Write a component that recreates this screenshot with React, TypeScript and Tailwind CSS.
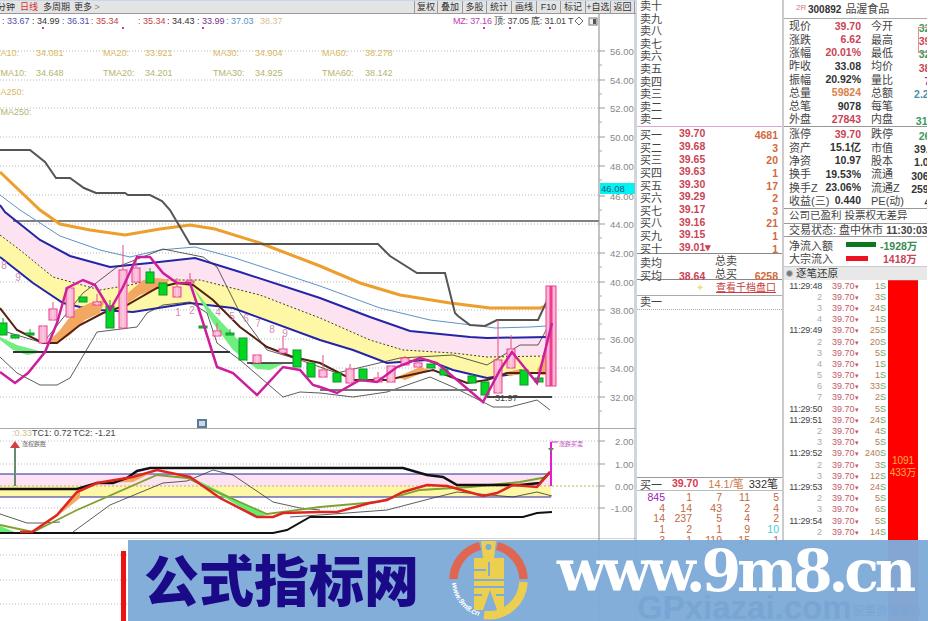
import React from "react";

type P = [number, number][];
const pts = (p: P) => p.map((a) => a.join(",")).join(" ");

const step: P = [[0,150],[30,150],[45,162],[56,178],[70,178],[84,188],[96,193],[125,193],[128,195],[150,195],[162,201],[170,210],[190,244],[378,244],[390,256],[417,273],[445,273],[455,313],[458,316],[470,325],[485,326],[497,320],[538,320],[552,290]];
const orange: P = [[0,172],[40,210],[60,224],[90,230],[125,235],[160,229],[190,225],[215,229],[260,243],[320,266],[360,283],[400,295],[450,303],[490,308],[520,308],[540,308],[550,305]];
const ltBlue: P = [[0,195],[20,210],[60,236],[100,250],[130,257],[160,250],[195,247],[235,258],[320,286],[380,308],[430,320],[480,326],[495,328],[530,327],[547,326]];
const blueTop: P = [[0,205],[5,212],[40,240],[70,256],[110,267],[150,263],[195,258],[240,272],[320,298],[370,317],[410,331],[470,337],[487,338],[548,337]];
const dashed: P = [[0,235],[20,250],[53,277],[100,290],[130,285],[150,280],[200,280],[260,295],[320,318],[370,340],[403,350],[453,353],[487,357],[548,356]];
const blueLow: P = [[0,257],[33,283],[63,303],[80,307],[100,310],[133,312],[190,303],[233,308],[320,340],[353,350],[387,363],[427,360],[453,370],[487,378],[520,373],[548,373]];
const magenta: P = [[0,372],[15,383],[28,373],[45,352],[57,323],[67,288],[83,280],[95,285],[110,310],[123,287],[137,257],[150,257],[163,273],[177,283],[190,283],[200,313],[217,367],[233,373],[257,395],[283,367],[300,370],[313,385],[320,387],[337,393],[360,380],[377,382],[397,367],[420,358],[437,363],[483,402],[500,370],[512,352],[537,383],[552,323]];
const brown: P = [[0,308],[17,330],[43,343],[57,343],[80,325],[103,313],[127,305],[157,288],[177,283],[193,285],[213,300],[240,327],[267,347],[293,357],[320,363],[353,380],[387,380],[433,370],[467,383],[487,380],[507,373],[548,373]];
const thinLow: P = [[0,357],[17,373],[40,385],[57,385],[70,378],[97,332],[137,327],[147,313],[163,305],[190,302],[207,313],[217,343],[240,360],[283,397],[300,392],[320,393],[353,397],[387,392],[430,377],[453,387],[493,407],[510,407],[537,400],[550,410]];
const thinUp: P = [[0,330],[43,343],[83,293],[117,267],[163,249],[203,257],[217,267],[240,313],[267,350],[300,360],[337,373],[400,358],[453,355],[487,365],[520,345],[538,345],[550,323]];

const candles: [number, number, number, number, boolean, number?][] = [
  [3,323,335,318,false],[15,335,338,335,false],[30,333,335,329,false],[43,326,343,326,true],[53,309,320,302,true],[70,288,317,288,true],[83,297,302,297,false],[97,302,305,294,true],[110,306,328,300,false],[123,270,328,245,true],[136,268,282,258,true],[150,272,283,268,false],[163,283,295,283,false],[177,287,297,278,true],[190,281,283,273,true],[203,326,328,326,false],[217,331,336,323,true],[230,333,335,329,false],[243,338,360,338,false],[257,355,363,355,true],[283,349,353,336,true],[297,350,367,350,false],[311,363,377,363,false],[323,370,377,355,true],[337,373,382,373,false],[350,369,383,364,true],[363,369,381,369,false],[378,378,382,372,true],[391,366,382,366,true],[405,358,365,356,true],[418,363,367,360,true],[431,364,368,364,false],[444,369,375,366,false],[472,376,383,374,false],[485,382,395,382,false],[498,360,393,320,true],[511,349,368,335,true],[524,370,385,370,false],[539,378,382,378,false],[551,286,386,286,true,10],
];

const gridY = [51,80,108,137,166,195,224,253,282,310,339,368,397];
const axisLabels: [string, number][] = [["56.00",51],["54.00",80],["52.00",108],["50.00",137],["48.00",166],["46.00",196],["44.00",224],["42.00",253],["40.00",282],["38.00",310],["36.00",339],["34.00",368],["32.00",397]];
const seq: [string, number, number][] = [["8",4,265],["9",18,277],["1",178,312],["2",192,310],["4",218,312],["5",232,316],["6",246,318],["7",258,323],["8",272,329],["9",285,333]];

const MainChart = () => (
  <svg viewBox="0 14 637 414" width={637} height={414} className="block shrink-0">
    {gridY.map((y) => <line key={y} x1={0} x2={599} y1={y} y2={y} stroke="#b8b8b8" strokeDasharray="1 2" />)}
    <polygon points={pts([...blueTop, ...[...dashed].reverse()])} fill="#fde3f1" />
    <polygon points={pts([...dashed, ...[...blueLow].reverse()])} fill="#fdf7a6" />
    <line x1={13} x2={599} y1={221} y2={221} stroke="#808080" strokeWidth={2} />
    <polyline points={pts(ltBlue)} fill="none" stroke="#5f92c4" />
    <polyline points={pts(orange)} fill="none" stroke="#ee9e2c" strokeWidth={3} />
    <polyline points={pts(blueTop)} fill="none" stroke="#2424a8" strokeWidth={2} />
    <polyline points={pts(dashed)} fill="none" stroke="#404020" strokeDasharray="2 2" />
    <polyline points={pts(blueLow)} fill="none" stroke="#2424a8" strokeWidth={2} />
    <polyline points={pts(step)} fill="none" stroke="#555" strokeWidth={2} />
    <polygon points="47,343 60,330 75,310 90,303 105,300 100,313 85,320 70,335 57,343" fill="#f2a860" />
    <polygon points="128,293 143,280 157,278 170,280 160,288 140,295 128,303" fill="#f2a860" />
    <polygon points="0,337 17,345 43,352 27,355 13,350 0,340" fill="#70ee80" />
    <polygon points="193,287 213,313 240,342 248,362 233,350 213,323" fill="#70ee80" />
    <polygon points="248,362 283,364 270,370 257,369" fill="#70ee80" />
    <polygon points="397,377 420,367 430,370 405,380" fill="#f2a860" />
    <polygon points="503,373 520,369 530,372 510,376" fill="#f2a860" />
    <polygon points="537,370 548,350 548,375 540,375" fill="#f2a860" />
    <polyline points={pts(thinUp)} fill="none" stroke="#333" strokeWidth={0.8} />
    <polyline points={pts(thinLow)} fill="none" stroke="#333" strokeWidth={0.8} />
    <polyline points={pts(brown)} fill="none" stroke="#552010" strokeWidth={2} />
    <line x1={13} x2={230} y1={352} y2={352} stroke="#333" strokeWidth={2} />
    <line x1={247} x2={300} y1={363} y2={363} stroke="#222" strokeWidth={1.5} />
    <line x1={320} x2={477} y1={390} y2={390} stroke="#777" strokeWidth={2} />
    <line x1={487} x2={552} y1={397} y2={397} stroke="#444" strokeWidth={2} />
    {candles.map(([x, t, b, w, up, cw], i) => {
      const wd = cw ?? 8;
      return (
        <g key={i}>
          <line x1={x} x2={x} y1={w} y2={t} stroke={up ? "#e05080" : "#00b020"} />
          {up ? (
            <>
              <rect x={x - wd / 2} y={t} width={wd} height={b - t} fill="#fbb8d4" stroke="#ee3c90" />
              <line x1={x} x2={x} y1={t} y2={b} stroke={wd > 8 ? "#ee3c90" : "#f9d8e8"} strokeWidth={wd > 8 ? 3 : 1} />
            </>
          ) : (
            <rect x={x - wd / 2} y={t} width={wd} height={b - t} fill="#00d820" stroke="#109030" />
          )}
        </g>
      );
    })}
    <polyline points={pts(magenta)} fill="none" stroke="#cc1f9c" strokeWidth={2.5} />
    {seq.map(([t, x, y], i) => <text key={i} x={x} y={y + 4} fontSize={10} fill="#d28ab2" textAnchor="middle">{t}</text>)}
    <text x={495} y={401} fontSize={9} fill="#444">31.97</text>

    <g fontSize={9}>
      {([[2,"#4a50b0",": 33.67"],[32,"#333",": 34.99"],[62,"#4a50b0",": 36.31"],[91,"#c0404a",": 35.34"],[138,"#c0404a",": 35.34"],[167,"#333",": 34.43"],[197,"#703090",": 33.99"],[226,"#5a90c0",": 37.03"],[260,"#e0c090","38.37"]] as [number,string,string][]).map(([x,c,t],i)=><text key={i} x={x} y={24} fill={c}>{t}</text>)}
      {([[-7,"MA10:",53],[36,"34.081",53],[103,"MA20:",53],[145,"33.921",53],[213,"MA30:",53],[255,"34.904",53],[322,"MA60:",53],[365,"38.278",53]] as [number,string,number][]).map(([x,t,y],i)=><text key={i} x={x} y={y+3} fill="#d8b860">{t}</text>)}
      {([[-5,"TMA10:",73],[36,"34.648",73],[103,"TMA20:",73],[145,"34.201",73],[213,"TMA30:",73],[255,"34.925",73],[322,"TMA60:",73],[365,"38.142",73]] as [number,string,number][]).map(([x,t,y],i)=><text key={i} x={x} y={y+3} fill="#b4b470">{t}</text>)}
      <text x={-7} y={95} fill="#d8b860">MA250:</text>
      <text x={-5} y={115} fill="#b4b470">TMA250:</text>
      <text x={453} y={24} fill="#c040b0" letterSpacing={-0.2}>MZ: 37.16</text>
      <text x={494} y={24} fill="#444" letterSpacing={-0.2}>顶: 37.05</text>
      <text x={531} y={24} fill="#444" letterSpacing={-0.2}>底: 31.01</text>
      <text x={568} y={24} fill="#444">T</text>
    </g>
    {[[42,27],[122,27],[202,27],[483,27],[509,27],[549,27]].map(([x,y],i)=><rect key={i} x={x} y={y} width={2} height={2} fill="#c040b0" />)}
    <path d="M579 17 l4 4 l-4 4 l-4 -4 z" fill="none" stroke="#666" />
    <rect x={589} y={18} width={8} height={7} fill="#eee" stroke="#777" />
    <rect x={593} y={19} width={3} height={5} fill="#555" />

    <rect x={197} y={419} width={10} height={9} fill="#5a7a98" />
    <rect x={199} y={421} width={6} height={5} fill="#c8d8e8" />

    <line x1={599} x2={599} y1={14} y2={428} stroke="#888" />
    {axisLabels.map(([t,y]) => (
      <g key={t}>
        <line x1={599} x2={605} y1={y} y2={y} stroke="#999" />
        <line x1={599} x2={602} y1={y+14} y2={y+14} stroke="#aaa" />
        <text x={610} y={y+3.5} fontSize={9.5} fill="#888">{t}</text>
      </g>
    ))}
    <rect x={600} y={183} width={35} height={11} fill="#00f4f4" />
    <text x={601} y={192} fontSize={9.5} fill="#205a80">46.08</text>
    <line x1={635} x2={635} y1={14} y2={428} stroke="#aaa" />
  </svg>
);

const sBlack: P = [[0,489],[77,489],[97,483],[113,483],[127,478],[137,471],[150,468],[403,468],[427,475],[443,477],[457,485],[520,485],[540,483],[550,472]];
const sBottom: P = [[0,533],[273,533],[287,530],[310,517],[523,517],[537,513],[552,512]];
const sRed: P = [[20,532],[32,532],[57,515],[77,492],[97,483],[133,477],[157,470],[190,477],[220,498],[257,517],[273,517],[283,513],[320,512],[337,512],[370,503],[387,500],[403,492],[427,485],[447,486],[483,496],[497,493],[513,485],[537,487],[550,472]];
const sOlive: P = [[0,525],[33,532],[77,510],[157,475],[187,478],[217,492],[267,514],[320,507],[377,502],[420,490],[470,487],[520,482],[547,477]];
const sThin1: P = [[0,514],[27,523],[43,523],[60,522]];
const sThin2: P = [[73,532],[110,505],[163,483],[187,481],[213,470],[233,475],[273,502],[300,508],[320,510]];
const sThin3: P = [[290,517],[320,515],[387,510],[433,498],[457,492],[513,497],[537,492],[552,496]];

const SubChart = () => (
  <svg viewBox="0 428 637 110" width={637} height={110} className="block shrink-0">
    <line x1={0} x2={637} y1={428.5} y2={428.5} stroke="#aaa" />
    <rect x={0} y={474} width={551} height={12} fill="#fde3f1" />
    <rect x={0} y={486} width={551} height={11} fill="#fdf7a6" />
    {[441,464,508].map((y)=><line key={y} x1={0} x2={599} y1={y} y2={y} stroke="#bbb" strokeDasharray="1 2" />)}
    <line x1={0} x2={599} y1={486} y2={486} stroke="#c8b060" strokeDasharray="2 2" />
    <line x1={0} x2={551} y1={474} y2={474} stroke="#2424a8" />
    <line x1={0} x2={551} y1={497} y2={497} stroke="#2424a8" />
    <polygon points="50,522 80,490 80,498" fill="#f2a860" />
    <polygon points="100,483 157,470 133,482" fill="#f2a860" />
    <polygon points="193,478 267,515 257,517 220,495" fill="#60ee70" />
    <polygon points="0,526 17,533 0,532" fill="#60ee70" />
    <polyline points={pts(sThin1)} fill="none" stroke="#333" strokeWidth={0.8} />
    <polyline points={pts(sThin2)} fill="none" stroke="#333" strokeWidth={0.8} />
    <polyline points={pts(sThin3)} fill="none" stroke="#333" strokeWidth={0.8} />
    <polyline points={pts(sOlive)} fill="none" stroke="#80a030" strokeWidth={1.8} />
    <polyline points={pts(sBottom)} fill="none" stroke="#111" strokeWidth={2} />
    <polyline points={pts(sBlack)} fill="none" stroke="#111" strokeWidth={2.5} />
    <polyline points={pts(sRed)} fill="none" stroke="#e02420" strokeWidth={2.5} />
    <line x1={15} x2={15} y1={486} y2={446} stroke="#6a8a70" strokeWidth={2} />
    <polygon points="15,441 20,448 10,448" fill="#d04040" />
    <text x={22} y={446} fontSize={6} fill="#666">涨权跌胜</text>
    <line x1={551} x2={551} y1={442} y2={486} stroke="#e020d0" strokeWidth={2} />
    <line x1={551} x2={558} y1={442} y2={442} stroke="#e020d0" />
    <polygon points="548,448 554,448 551,452" fill="#777" />
    <text x={559} y={446} fontSize={6} fill="#c050c0">涨跌买卖</text>
    <g fontSize={9}>
      <text x={12} y={436} fill="#d0c090">:0.33</text>
      <text x={32} y={436} fill="#444">TC1: 0.72</text>
      <text x={73} y={436} fill="#444">TC2: -1.21</text>
    </g>
    <line x1={599} x2={599} y1={428} y2={538} stroke="#888" />
    {([["2.00",441,615],["1.00",464,615],["0.00",486,615],["-1.00",508,611]] as [string,number,number][]).map(([t,y,x])=>(
      <g key={t}>
        <line x1={599} x2={605} y1={y} y2={y} stroke="#999" />
        <text x={x} y={y+3.5} fontSize={9.5} fill="#888">{t}</text>
      </g>
    ))}
    <line x1={635} x2={635} y1={428} y2={538} stroke="#aaa" />
  </svg>
);

const ThirdPane = () => (
  <svg viewBox="0 538 637 83" width={637} height={83} className="block shrink-0">
    <line x1={0} x2={637} y1={538} y2={538} stroke="#aaa" />
    {[555,580,604].map((y)=><line key={y} x1={0} x2={599} y1={y} y2={y} stroke="#bbb" strokeDasharray="1 2" />)}
    <rect x={121} y={551} width={5} height={70} fill="#ee1111" />
    <line x1={599} x2={599} y1={538} y2={621} stroke="#888" />
    <line x1={635} x2={635} y1={538} y2={621} stroke="#aaa" />
  </svg>
);

const tabs: [string, number][] = [["复权",23],["叠加",25],["多股",24],["统计",25],["画线",25],["F10",24],["标记",25],["+自选",25],["返回",24]];

const Toolbar = () => (
  <div className="h-[14px] shrink-0 flex items-center bg-[#e4e4e4] border-t border-t-[#c8d8e8] border-b border-b-[#999] text-[9px] text-[#333] leading-none">
    <span className="w-[15px] shrink-0 overflow-hidden whitespace-nowrap flex justify-end">分钟</span>
    <span className="ml-[5px] text-[#d03030] w-[23px] shrink-0 whitespace-nowrap">日线</span>
    <span className="whitespace-nowrap w-[31px] shrink-0">多周期</span>
    <span className="whitespace-nowrap">更多 <span className="text-[#888]">&gt;</span></span>
    <div className="ml-auto flex h-full">
      {tabs.map(([t, w]) => (
        <span key={t} style={{ width: w }} className="flex items-center justify-center border-l border-[#999] whitespace-nowrap">{t}</span>
      ))}
      <span className="w-[1px] bg-[#999]" />
      <span className="w-[1px]" />
    </div>
  </div>
);

const L = ({ children }: { children: React.ReactNode }) => <span className="text-[#444] text-[11px] whitespace-nowrap">{children}</span>;
const B = ({ c, children }: { c: string; children: React.ReactNode }) => <span style={{ color: c }} className="font-bold text-[10.5px] whitespace-nowrap">{children}</span>;

const sellLabels = ["卖十","卖九","卖八","卖七","卖六","卖五","卖四","卖三","卖二","卖一"];
const buys: [string,string,string][] = [["买一","39.70","4681"],["买二","39.68","3"],["买三","39.65","20"],["买四","39.63","1"],["买五","39.30","17"],["买六","39.29","2"],["买七","39.17","3"],["买八","39.16","21"],["买九","39.15","1"],["买十","39.01▾","1"]];
const red = "#c94455", org = "#d06a3c";
const vol = [["845","1","7","11","5"],["4","14","43","2","4"],["14","237","5","4","2"],["1","2","1","9","10"],["3","1","119","15","1"]];

const Book = () => (
  <div className="w-[148px] shrink-0 flex flex-col border-r-2 border-[#ccc] border-l border-l-[#c8d8e8] overflow-hidden h-full">
    <div className="h-[127px] shrink-0 flex flex-col border-b border-[#dda8d0] pl-[3px]">
      {sellLabels.map((t)=><div key={t} className="h-[12.6px] flex items-center"><L>{t}</L></div>)}
    </div>
    <div className="h-[127px] shrink-0 pl-[3px] pr-[4px] pt-[1px] border-b border-[#888]">
      {buys.map(([a,b,c])=>(
        <div key={a} className="h-[12.6px] flex items-center">
          <span className="w-[39px]"><L>{a}</L></span>
          <B c={red}>{b}</B>
          <span className="ml-auto"><B c={org}>{c}</B></span>
        </div>
      ))}
    </div>
    <div className="h-[26px] shrink-0 pl-[3px] pr-[4px] pt-[1px] border-b border-[#888] flex flex-col">
      <div className="h-[13px] flex items-center"><span className="w-[75px]"><L>卖均</L></span><L>总卖</L></div>
      <div className="h-[13px] flex items-center"><span className="w-[39px]"><L>买均</L></span><span className="w-[36px]"><B c={red}>38.64</B></span><L>总买</L><span className="ml-auto"><B c={org}>6258</B></span></div>
    </div>
    <div className="h-[16px] shrink-0 border-b border-[#aaa] flex items-center pl-[59px] gap-[12px]">
      <span className="text-[10px] text-[#eee080] leading-none">✦</span>
      <span className="text-[#c83c3c] text-[10px] underline whitespace-nowrap">查看千档盘口</span>
    </div>
    <div className="h-[14px] shrink-0 pl-[3px] border-b border-dotted border-[#aaa] flex items-center"><L>卖一</L></div>
    <div className="flex-1 min-h-0 flex flex-col">
      <div className="h-[167px] shrink-0" />
      <div className="h-[14px] shrink-0 border-t border-[#999] border-b border-b-[#bbb] flex items-center pl-[3px] pr-[4px]" >
        <span className="w-[32px]"><L>买一</L></span>
        <B c="#d83a50">39.70</B>
        <span className="ml-[10px] text-[#d07a4a] text-[11px] whitespace-nowrap">14.1/笔</span>
        <span className="ml-auto text-[#333] text-[11px] whitespace-nowrap">332笔</span>
      </div>
      <div className="pt-[1px]">
        {vol.map((r,i)=>(
          <div key={i} className="grid grid-cols-[28px_27px_30px_28px_29px] h-[10.7px] items-center text-[10.5px] leading-none">
            {r.map((v,j)=><span key={j} className="text-right font-medium" style={{color: v==="845"?"#9a20b8":v==="10"?"#40d0d8":"#c2683e"}}>{v}</span>)}
          </div>
        ))}
      </div>
    </div>
  </div>
);

const Q = ({ a, b, bc, c, d, dc, box }: { a: string; b: string; bc: string; c: string; d: string; dc: string; box?: boolean }) => (
  <div className="h-[13.3px] flex items-center pl-[5px] w-[170px]">
    <div className="w-[72px] flex items-center justify-between shrink-0"><L>{a}</L><B c={bc}>{b}</B></div>
    <div className="ml-[10px] w-[74px] flex items-center justify-between shrink-0"><L>{c}</L><span className={box ? "outline outline-1 outline-[#e09090]" : ""}><B c={dc}>{d}</B></span></div>
  </div>
);

const dk = "#333";
const grn = "#3a9a5a";
const ticks: [string,string][] = [["11:29:48","1"],["2","3"],["3","24"],["4","1"],["11:29:49","25"],["2","20"],["3","5"],["4","1"],["5","1"],["6","33"],["7","2"],["11:29:50","5"],["11:29:51","24"],["2","4"],["3","5"],["11:29:52","240"],["2","3"],["3","12"],["11:29:53","24"],["2","5"],["3","6"],["11:29:54","5"],["2","14"]];

const Quote = () => (
  <div className="w-[143px] shrink-0 flex flex-col overflow-hidden h-full">
    <div className="h-[19px] shrink-0 border-b border-[#aaa] flex items-center pl-[12px]">
      <span className="text-[8px] text-[#d87a8a] leading-none mb-[3px] w-[12px] whitespace-nowrap">2R</span>
      <span className="font-bold text-[10px] text-[#333]">300892</span>
      <span className="ml-[4px] text-[#444] text-[11px] whitespace-nowrap">品渥食品</span>
    </div>
    <div className="h-[108px] shrink-0 border-b border-[#999] pt-[1px]">
      <Q a="现价" b="39.70" bc={red} c="今开" d="32.40" dc={grn} />
      <Q a="涨跌" b="6.62" bc={red} c="最高" d="39.70" dc={red} box />
      <Q a="涨幅" b="20.01%" bc={red} c="最低" d="32.00" dc={grn} />
      <Q a="昨收" b="33.08" bc={dk} c="均价" d="38.64" dc={red} />
      <Q a="振幅" b="20.92%" bc={dk} c="量比" d="7.09" dc="#9030b0" />
      <Q a="总量" b="59824" bc="#d8804a" c="总额" d="2.21亿" dc="#4a90a8" />
      <Q a="总笔" b="9078" bc={dk} c="每笔" d="" dc={dk} />
      <Q a="外盘" b="27843" bc={red} c="内盘" d="31981" dc={grn} />
    </div>
    <div className="h-[82px] shrink-0 border-b border-[#999] pt-[1px]">
      <Q a="涨停" b="39.70" bc={red} c="跌停" d="26.46" dc={grn} />
      <Q a="资产" b="15.1亿" bc={dk} c="市值" d="39.7亿" dc={dk} />
      <Q a="净资" b="10.97" bc={dk} c="股本" d="1.00亿" dc={dk} />
      <Q a="换手" b="19.53%" bc={dk} c="流通" d="3063万" dc={dk} />
      <Q a="换手Z" b="23.06%" bc={dk} c="流通Z" d="2593万" dc={dk} />
      <Q a="收益(三)" b="0.440" bc={dk} c="PE(动)" d="45.1" dc={dk} />
    </div>
    <div className="h-[15px] shrink-0 border-b border-[#999] flex items-center pl-[5px]"><span className="text-[#444] text-[10.5px] whitespace-nowrap">公司已盈利 投票权无差异</span></div>
    <div className="h-[13px] shrink-0 border-b border-[#999] flex items-center pl-[5px] whitespace-nowrap"><span className="text-[#444] text-[11px]">交易状态: 盘中休市 <span className="font-bold text-[10.5px]">11:30:03</span></span></div>
    <div className="h-[29px] shrink-0 flex flex-col justify-center pl-[5px]">
      <div className="h-[13.3px] flex items-center whitespace-nowrap w-[170px]">
        <span className="w-[57px]"><L>净流入额</L></span>
        <span className="w-[30px] h-[5px] bg-[#0a7a20]" />
        <span className="ml-[4px]"><B c="#3a8a50">-1928万</B></span>
        <span className="ml-[11px]"><B c="#3a8a50">-</B></span>
      </div>
      <div className="h-[13.3px] flex items-center whitespace-nowrap">
        <span className="w-[57px]"><L>大宗流入</L></span>
        <span className="w-[22px] h-[5px] bg-[#ee1122]" />
        <span className="ml-[15px]"><B c={red}>1418万</B></span>
      </div>
    </div>
    <div className="h-[14px] shrink-0 bg-[#e8e8e8] border-t border-[#ccc] flex items-center pl-[2px] gap-[3px]">
      <span className="w-[7px] h-[7px] rounded-full bg-[#777] border border-[#bbb]" />
      <span className="text-[10.5px] text-[#333] whitespace-nowrap">逐笔还原</span>
    </div>
    <div className="flex-1 min-h-0 flex relative">
      <div className="w-[104px] shrink-0 pt-[0.5px]">
        {ticks.map(([t,q],i)=>(
          <div key={i} className="h-[11.2px] flex items-center text-[9px] leading-none whitespace-nowrap">
            <span className={t.length>2?"w-[38px] text-right text-[#444] tracking-[-0.2px]":"w-[38px] text-right text-[#aaa]"}>{t}</span>
            <span className="ml-[10px] w-[30px] text-[#c25a66]">39.70<span className="text-[7px]">▾</span></span>
            <span className="w-[24px] text-right text-[#b87a50]">{q}<span className="text-[#66aa66]">S</span></span>
          </div>
        ))}
      </div>
      <div className="w-[30px] shrink-0 bg-[#ff0000] border-t border-[#e04040] flex flex-col items-center text-[10px] text-[#ffb040] leading-[12px] pt-[174px]">
        <span>1091</span><span>433万</span>
      </div>
    </div>
  </div>
);

const Banner = () => (
  <div className="absolute left-[128px] top-[540px] w-[800px] h-[81px] bg-[#7fabd9]/[0.97] overflow-hidden">
    <div className="absolute left-[16px] top-[-3px] text-[55px] leading-[80px] font-black text-[#1b0a88] whitespace-nowrap [font-family:'Noto_Sans_CJK_SC',sans-serif]">公式指标网</div>
    <svg width={84} height={84} viewBox="446 538 84 84" className="absolute left-[318px] top-[-2px]">
      <g fill="none" strokeWidth={8.5}>
        <path d="M453.5 579 A35 35 0 0 1 480 546" stroke="#df6650" />
        <path d="M497 546 A35 35 0 0 1 523.5 579" stroke="#df6650" />
        <path d="M523.5 582 A35 35 0 0 1 484 615" stroke="#edcf4f" />
      </g>
      <path d="M481 541 H496 L494 558 H504 V610 H497 L490 590 L483 610 H474 V558 H483 Z" fill="#edcf4f" />
      <circle cx={488.5} cy={547} r={3} fill="#7fabd9" />
      <rect x={474} y={569} width={12} height={2} fill="#7fabd9" />
      <rect x={488} y={562} width={2} height={14} fill="#7fabd9" />
      <rect x={474} y={579} width={30} height={2} fill="#7fabd9" />
      <rect x={474} y={586} width={30} height={2} fill="#7fabd9" />
      <rect x={474} y={594} width={8} height={2} fill="#7fabd9" />
      <rect x={496} y={594} width={8} height={2} fill="#7fabd9" />
      <path id="logoArc" d="M452 583 A37 37 0 0 0 484 617" fill="none" />
      <text fontSize={7.5} fontWeight={700} fontStyle="italic" fill="#fff" fontFamily="'Liberation Sans',sans-serif">
        <textPath href="#logoArc">www.9m8.cn</textPath>
      </text>
    </svg>
    <div className="absolute left-[429px] top-[-9px] text-[57px] leading-[80px] font-bold text-white whitespace-nowrap tracking-[-4.2px] [font-family:'DejaVu_Serif',serif]">www.9m8.cn</div>
    <div className="absolute left-[509px] top-[55px] text-[33px] leading-[26px] font-bold text-[#79a5d5] whitespace-nowrap [font-family:'Liberation_Sans',sans-serif]">GPxiazai.com</div>
    <div className="absolute left-[725px] top-[63px] text-[11.5px] leading-[16px] text-[#79a5d5] whitespace-nowrap">股票资源整合</div>
  </div>
);

export default function App() {
  return (
    <div className="relative w-[928px] h-[621px] overflow-hidden bg-white flex [font-family:'Liberation_Sans','Noto_Sans_CJK_SC',sans-serif]">
      <div className="w-[636px] shrink-0 flex flex-col overflow-hidden h-full">
        <Toolbar />
        <MainChart />
        <SubChart />
        <ThirdPane />
      </div>
      <Book />
      <Quote />
      <Banner />
    </div>
  );
}
